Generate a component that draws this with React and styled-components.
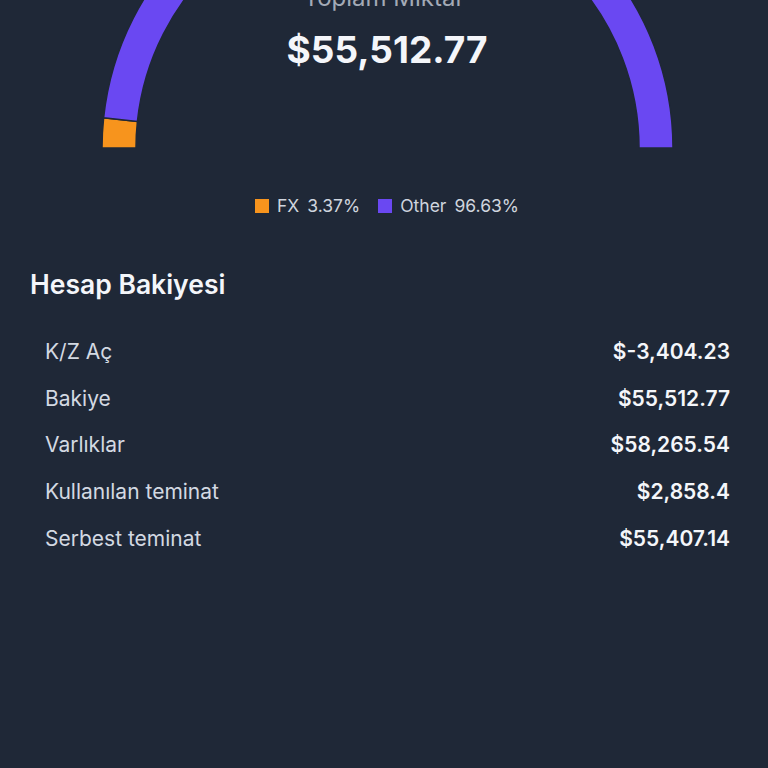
import React from "react";
import styled, { createGlobalStyle } from "styled-components";

const GlobalStyle = createGlobalStyle`
  html, body {
    margin: 0;
    padding: 0;
    background: #1f2837;
    font-family: "Inter", "Noto Sans", sans-serif;
    overflow: hidden;
  }
`;

const Page = styled.div`
  width: 768px;
  height: 768px;
  overflow: hidden;
  background: #1f2837;
  color: #f3f4f6;
`;

const ChartWrap = styled.div`
  position: relative;
  margin-top: -140px;
  height: 290px;
`;

const Center = styled.div`
  position: absolute;
  left: 0;
  right: 0;
  top: 122px;
  display: flex;
  flex-direction: column;
  align-items: center;
`;

const CenterLabel = styled.div`
  font-size: 24px;
  color: #a3aab6;
  line-height: 32px;
`;

const CenterValue = styled.div`
  font-size: 37px;
  font-weight: 700;
  color: #f4f6fa;
  line-height: 48px;
  margin-top: 12px;
  margin-left: 6px;
`;

const Legend = styled.div`
  display: flex;
  justify-content: center;
  gap: 18px;
  margin-top: 46px;
  margin-left: 6px;
`;

const LegendItem = styled.div`
  display: flex;
  align-items: center;
  gap: 8px;
  font-size: 17.5px;
  line-height: 20px;
  color: #cfd5de;
`;

const Swatch = styled.span`
  width: 14px;
  height: 14px;
  background: ${(p) => p.color};
`;

const Section = styled.section`
  padding: 52px 30px 0;
`;

const Title = styled.h2`
  margin: 0;
  font-size: 26.5px;
  font-weight: 600;
  line-height: 32px;
  color: #f4f6fa;
`;

const Rows = styled.div`
  margin-top: 28px;
  display: flex;
  flex-direction: column;
`;

const Row = styled.div`
  display: flex;
  justify-content: space-between;
  align-items: center;
  height: 46.75px;
  padding: 0 8px 0 15px;
  font-size: 21px;
`;

const Label = styled.span`
  color: #d3d9e2;
`;

const Value = styled.span`
  font-weight: 600;
  color: #f4f6fa;
`;

const CX = 387.5;
const CY = 288;
const RO = 285.5;
const RI = 251.5;

const pt = (r, deg) => {
  const a = (deg * Math.PI) / 180;
  return `${(CX + r * Math.cos(a)).toFixed(2)} ${(CY - r * Math.sin(a)).toFixed(2)}`;
};

const arcPath = (from, to) =>
  `M ${pt(RO, from)} A ${RO} ${RO} 0 0 1 ${pt(RO, to)} L ${pt(RI, to)} A ${RI} ${RI} 0 0 0 ${pt(RI, from)} Z`;

const segments = [
  { name: "FX", pct: 3.37, color: "#f7941d" },
  { name: "Other", pct: 96.63, color: "#6a48f2" },
];

const rows = [
  ["K/Z Aç", "$-3,404.23"],
  ["Bakiye", "$55,512.77"],
  ["Varlıklar", "$58,265.54"],
  ["Kullanılan teminat", "$2,858.4"],
  ["Serbest teminat", "$55,407.14"],
];

const Gauge = () => {
  let start = 180;
  return (
    <svg width="768" height="290" viewBox="0 0 768 290">
      {segments.map((s) => {
        const end = start - (s.pct / 100) * 180;
        const d = arcPath(start, end);
        start = end;
        return <path key={s.name} d={d} fill={s.color} stroke="#1f2837" strokeWidth="1.5" />;
      })}
    </svg>
  );
};

export default function App() {
  return (
    <>
      <GlobalStyle />
      <Page>
        <ChartWrap>
          <Gauge />
          <Center>
            <CenterLabel>Toplam Miktar</CenterLabel>
            <CenterValue>$55,512.77</CenterValue>
          </Center>
        </ChartWrap>
        <Legend>
          {segments.map((s) => (
            <LegendItem key={s.name}>
              <Swatch color={s.color} />
              <span>{s.name}</span>
              <span>{s.pct.toFixed(2)}%</span>
            </LegendItem>
          ))}
        </Legend>
        <Section>
          <Title>Hesap Bakiyesi</Title>
          <Rows>
            {rows.map(([l, v]) => (
              <Row key={l}>
                <Label>{l}</Label>
                <Value>{v}</Value>
              </Row>
            ))}
          </Rows>
        </Section>
      </Page>
    </>
  );
}
